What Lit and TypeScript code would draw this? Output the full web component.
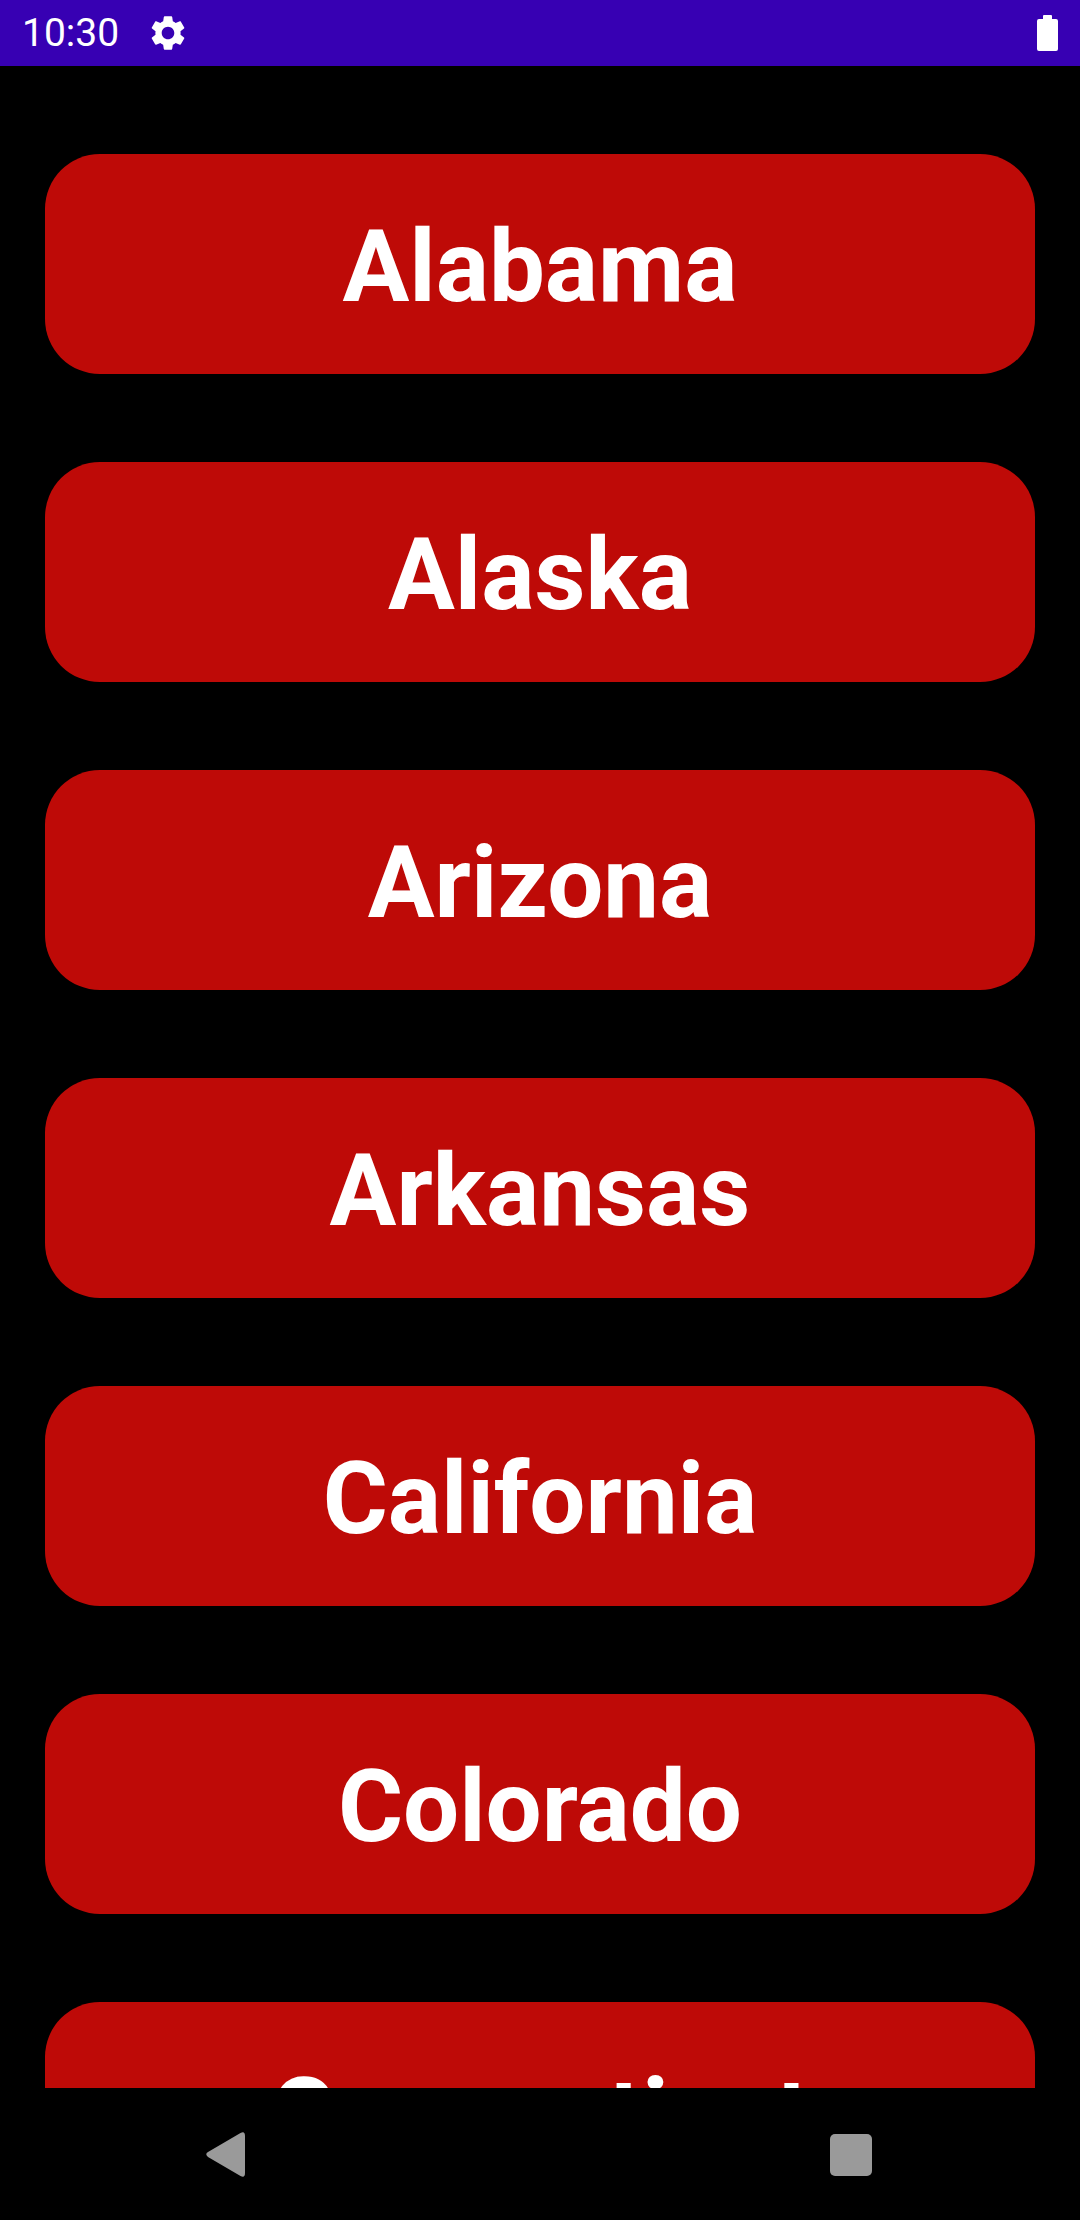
import { LitElement, html, css } from "lit";
import { customElement } from "lit/decorators.js";

const STATES = ["Alabama", "Alaska", "Arizona", "Arkansas", "California", "Colorado", "Connecticut"];

@customElement("app-root")
export class AppRoot extends LitElement {
  static styles = css`
    :host { display: flex; flex-direction: column; width: 1080px; height: 2220px; background: #000; font-family: Roboto, sans-serif; overflow: hidden; }
    .status { flex: none; height: 66px; background: #3700b3; display: flex; align-items: center; padding: 0 22px; box-sizing: border-box; color: #fff; }
    .time { font-size: 39px; line-height: 66px; }
    .gear { width: 42px; height: 42px; margin-left: 28px; display: block; }
    .spacer { flex: 1; }
    .battery { width: 21px; height: 36px; display: block; }
    .list { flex: none; height: 2022px; overflow: hidden; display: flex; flex-direction: column; gap: 88px; padding: 88px 45px 0; box-sizing: border-box; }
    .card { flex: none; height: 220px; padding-top: 6px; box-sizing: border-box; border-radius: 55px; background: #be0a07; color: #fff; display: flex; align-items: center; justify-content: center; font-size: 99.5px; font-weight: 700; }
    .nav { flex: none; height: 132px; display: flex; align-items: flex-start; padding: 44px 0 0 206px; box-sizing: border-box; gap: 585px; }
    .nav svg { display: block; }
    .square { margin-top: 2px; }
  `;

  render() {
    return html`
      <div class="status">
        <span class="time">10:30</span>
        <svg class="gear" viewBox="0 0 24 24" fill="#fff"><path d="M19.14 12.94c.04-.3.06-.61.06-.94 0-.32-.02-.64-.07-.94l2.03-1.58c.18-.14.23-.41.12-.61l-1.92-3.32c-.12-.22-.37-.29-.59-.22l-2.39.96c-.5-.38-1.03-.7-1.62-.94l-.36-2.54c-.04-.24-.24-.41-.48-.41h-3.84c-.24 0-.43.17-.47.41l-.36 2.54c-.59.24-1.13.57-1.62.94l-2.39-.96c-.22-.08-.47 0-.59.22L2.74 8.87c-.12.21-.08.47.12.61l2.03 1.58c-.05.3-.09.63-.09.94s.02.64.07.94l-2.03 1.58c-.18.14-.23.41-.12.61l1.92 3.32c.12.22.37.29.59.22l2.39-.96c.5.38 1.03.7 1.62.94l.36 2.54c.05.24.24.41.48.41h3.84c.24 0 .44-.17.47-.41l.36-2.54c.59-.24 1.13-.56 1.62-.94l2.39.96c.22.08.47 0 .59-.22l1.92-3.32c.12-.22.07-.47-.12-.61l-2.01-1.58zM12 15.6c-1.98 0-3.6-1.62-3.6-3.6s1.62-3.6 3.6-3.6 3.6 1.62 3.6 3.6-1.62 3.6-3.6 3.6z"/></svg>
        <div class="spacer"></div>
        <svg class="battery" viewBox="0 0 21 36" fill="#fff"><path d="M6 1a1 1 0 0 1 1-1h7a1 1 0 0 1 1 1v3h4a2 2 0 0 1 2 2v28a2 2 0 0 1-2 2H2a2 2 0 0 1-2-2V6a2 2 0 0 1 2-2h4z"/></svg>
      </div>
      <div class="list">
        ${STATES.map((s) => html`<div class="card">${s}</div>`)}
      </div>
      <div class="nav">
        <svg width="39" height="45" viewBox="0 0 39 45" fill="#9a9a9a"><path d="M34.500 1Q39-1.500 39 4V41Q39 46.500 34.500 44L2 25Q-1.500 22 2 20Z"/></svg>
        <svg class="square" width="42" height="42" viewBox="0 0 42 42" fill="#9a9a9a"><rect width="42" height="42" rx="5"/></svg>
      </div>
    `;
  }
}
